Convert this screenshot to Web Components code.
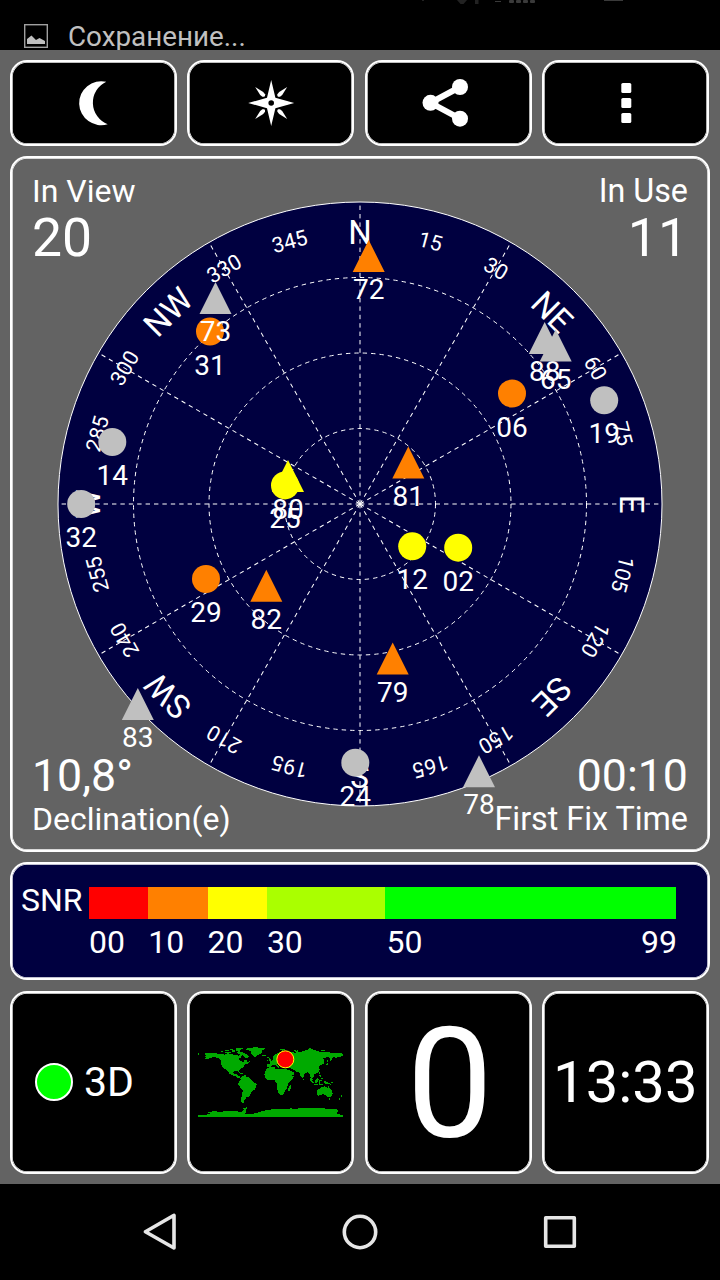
<!DOCTYPE html>
<html lang="en">
<head>
<meta charset="utf-8">
<title>GPS Status</title>
<style>
  html, body { margin: 0; background: #000; }
  body { font-family: Roboto, "Noto Sans", sans-serif; color: #fff; }
</style>
</head>
<body>
<gps-screen></gps-screen>

<script>
const COLORS = {
  none:   '#c0c0c0',
  low:    '#ff8000',
  medium: '#ffff00',
}

// x / y are offsets from the zenith, in px
const SATELLITES = [
  { id: '31', type: 'gps',     snr: 'low',    x: -150,   y: -172.5 },
  { id: '73', type: 'glonass', snr: 'none',   x: -144.5, y: -206 },
  { id: '72', type: 'glonass', snr: 'low',    x: 8.7,    y: -248 },
  { id: '88', type: 'glonass', snr: 'none',   x: 184.7,  y: -166 },
  { id: '65', type: 'glonass', snr: 'none',   x: 195.7,  y: -158.4 },
  { id: '06', type: 'gps',     snr: 'low',    x: 152,    y: -110.5 },
  { id: '19', type: 'gps',     snr: 'none',   x: 244.2,  y: -103.7 },
  { id: '14', type: 'gps',     snr: 'none',   x: -247.7, y: -62 },
  { id: '32', type: 'gps',     snr: 'none',   x: -278.8, y: 0 },
  { id: '80', type: 'glonass', snr: 'medium', x: -72,    y: -28 },
  { id: '25', type: 'gps',     snr: 'medium', x: -75,    y: -18.6 },
  { id: '81', type: 'glonass', snr: 'low',    x: 48.3,   y: -41.5 },
  { id: '12', type: 'gps',     snr: 'medium', x: 52.2,   y: 42.3 },
  { id: '02', type: 'gps',     snr: 'medium', x: 98.2,   y: 43.7 },
  { id: '29', type: 'gps',     snr: 'low',    x: -154,   y: 75 },
  { id: '82', type: 'glonass', snr: 'low',    x: -93.7,  y: 81.7 },
  { id: '79', type: 'glonass', snr: 'low',    x: 32.7,   y: 154.5 },
  { id: '83', type: 'glonass', snr: 'none',   x: -222.2, y: 200 },
  { id: '24', type: 'gps',     snr: 'none',   x: -4.7,   y: 258.7 },
  { id: '78', type: 'glonass', snr: 'none',   x: 119,    y: 267.2 },
]

const POINTS = { 0: 'N', 45: 'NE', 90: 'E', 135: 'SE', 180: 'S', 225: 'SW', 270: 'W', 315: 'NW' }

const ICONS = {
  moon: `<path d="M25.8 2.6A22 22 0 1 0 27.2 45A23 23 0 0 1 25.8 2.6Z" transform="translate(10.5 .2)"/>`,
  compass: `
    <g transform="translate(24.2 24)">
      <path fill-rule="evenodd" d="M0-23L4.2-5.2L23 0L4.2 5.2L0 23L-4.2 5.2L-23 0L-4.2-5.2ZM0-2.8A2.8 2.8 0 1 0 0 2.8A2.8 2.8 0 1 0 0-2.8Z"/>
      ${[0, 90, 180, 270].map(a => `<path transform="rotate(${a})" d="M-16-16L-8-11L-6.2-8.8V-7L-7-6.2H-8.8L-11-8Z"/>`).join('')}
    </g>`,
  share: `
    <path d="M36 8L6.500 23.8L36 39.7" fill="none" stroke="#fff" stroke-width="6"/>
    <circle cx="6.500" cy="23.8" r="8"/><circle cx="36" cy="8" r="8"/><circle cx="36" cy="39.700" r="8"/>`,
  more: [4, 19, 34].map(y => `<rect x="19.3" y="${y}" width="10" height="10" rx="1.6"/>`).join(''),
}

class StatusBar extends HTMLElement {
  connectedCallback() {
    this.attachShadow({ mode: 'open' }).innerHTML = `
      <style>
        :host {
          display: flex;
          justify-content: space-between;
          height: 50px;
          overflow: hidden;
          background: #000;
          color: #c0c0c0;
        }
        .note { display: flex; align-items: flex-start; gap: 20px; padding: 19px 0 0 24px; }
        .note svg { margin-top: 5px; }
        .text { font-size: 27.8px; line-height: 35px; white-space: nowrap; }
      </style>
      <div class="note">
        <svg width="24" height="24">
          <rect x=".7" y=".7" width="22.6" height="22.6" fill="none" stroke="#a0a0a0" stroke-width="1.4"/>
          <path fill="#c0c0c0" d="M3 20V15L7.5 11.5L12 16L15.5 14L21 17V20Z"/>
        </svg>
        <div class="text"><slot></slot></div>
      </div>
      <svg width="300" height="6">
        <g fill="#222">
          <rect x="2" width="2" height="1"/>
          <path d="M37 0H47L43.500 4H40.500Z"/>
          <rect x="55" width="3.500" height="4"/>
        </g>
        <g fill="#3a3a3a">
          <rect x="75" y="1" width="6" height="1"/>
          <rect x="89" width="5" height="3" rx="1"/>
          <rect x="96" width="5" height="3" rx="1"/>
          <rect x="103" width="5" height="3" rx="1"/>
          <rect x="110" width="5" height="3" rx="1"/>
          <rect x="184" width="19" height="1"/>
        </g>
      </svg>
    `
  }
}

class GpsPanel extends HTMLElement {
  connectedCallback() {
    const bg = this.getAttribute('bg') ?? '#000'
    this.attachShadow({ mode: 'open' }).innerHTML = `
      <style>
        :host {
          display: grid;
          place-items: center;
          box-sizing: border-box;
          min-width: 0;
          border: 2px solid #fff;
          border-radius: 17px;
          background: ${bg};
          box-shadow: inset 0 0 0 .7px #fff;
        }
      </style>
      <slot></slot>
    `
  }
}

class GpsIcon extends HTMLElement {
  connectedCallback() {
    this.attachShadow({ mode: 'open' }).innerHTML = `
      <style>
        :host { display: block; width: 48px; height: 48px; }
        svg { display: block; overflow: visible; }
      </style>
      <svg width="48" height="48" fill="#fff">${ICONS[this.getAttribute('name')]}</svg>
    `
  }
}

class SkyView extends HTMLElement {
  connectedCallback() {
    const R = 302
    const rings = [1, 2, 3].map(i => `<circle r="${R * i / 4}"/>`).join('')
    let spokes = ''
    let labels = ''
    for (let a = 0; a < 360; a += 15) {
      if (a % 30 === 0) spokes += `<line y2="${-R}" transform="rotate(${a})"/>`
      labels += POINTS[a]
        ? `<text class="point" y="-260" transform="rotate(${a})">${POINTS[a]}</text>`
        : `<text class="deg" y="-264.500" transform="rotate(${a})">${a}</text>`
    }

    this.attachShadow({ mode: 'open' }).innerHTML = `
      <style>
        :host { display: block; width: 696px; height: 692px; }
        svg { display: block; }
        text { fill: #fff; text-anchor: middle; }
        .grid { fill: none; stroke: #fff; stroke-width: 1; stroke-dasharray: 4.4 4; }
        .point { font-size: 33px; }
        .deg { font-size: 21.3px; }
        .id { font-size: 28px; }
      </style>
      <svg width="696" height="692" viewBox="-348 -346 696 692">
        <circle r="${R}" fill="#000040" stroke="#fff" stroke-width="1"/>
        <g class="grid">${rings}${spokes}</g>
        ${labels}
        ${SATELLITES.map(s => this._satellite(s)).join('')}
      </svg>
    `
  }

  _satellite({ id, type, snr, x, y }) {
    const shape = type === 'gps'
      ? `<circle r="14" fill="${COLORS[snr]}"/>`
      : `<path d="M0-16L16 16H-16Z" fill="${COLORS[snr]}"/>`
    return `<g transform="translate(${x} ${y})">${shape}<text class="id" y="43">${id}</text></g>`
  }
}

// four captions in the corners of the sky view
class SkyCaptions extends HTMLElement {
  connectedCallback() {
    this.attachShadow({ mode: 'open' }).innerHTML = `
      <style>
        :host {
          display: grid;
          grid-template-columns: auto auto;
          justify-content: space-between;
          align-content: space-between;
          box-sizing: border-box;
          width: 696px;
          height: 692px;
          padding: 14px 20px 12px;
        }
        .r { text-align: right; }
        .name { font-size: 32px; line-height: 38px; }
        .r .name { font-size: 32.3px; }
        .big { font-size: 53.5px; line-height: 56px; }
        .mid { font-size: 44.7px; line-height: 46px; margin-bottom: 1px; }
      </style>
      <div><div class="name">In View</div><div class="big">20</div></div>
      <div class="r"><div class="name">In Use</div><div class="big">11</div></div>
      <div><div class="mid">10,8°</div><div class="name">Declination(e)</div></div>
      <div class="r"><div class="mid">00:10</div><div class="name">First Fix Time</div></div>
    `
  }
}

class SnrScale extends HTMLElement {
  connectedCallback() {
    this.attachShadow({ mode: 'open' }).innerHTML = `
      <style>
        :host {
          display: grid;
          grid-template-columns: 68px 587px;
          box-sizing: border-box;
          width: 696px;
          height: 114px;
          padding: 23px 9px 0;
          font-size: 32px;
          line-height: 38px;
        }
        .title { margin-top: -6px; }
        .scale { display: grid; grid-template-columns: 10fr 10fr 10fr 20fr 49fr; align-content: start; }
        .bar { height: 32px; }
        .num { margin-top: 4px; }
        .last { display: flex; justify-content: space-between; margin-right: -1px; padding-left: 1px; }
      </style>
      <div class="title">SNR</div>
      <div class="scale">
        <div class="bar" style="background:#ff0000"></div>
        <div class="bar" style="background:#ff8000"></div>
        <div class="bar" style="background:#ffff00"></div>
        <div class="bar" style="background:#aaff00"></div>
        <div class="bar" style="background:#00ff00"></div>
        <div class="num">00</div>
        <div class="num">10</div>
        <div class="num">20</div>
        <div class="num">30</div>
        <div class="num last"><span>50</span><span>99</span></div>
      </div>
    `
  }
}

class FixState extends HTMLElement {
  connectedCallback() {
    this.attachShadow({ mode: 'open' }).innerHTML = `
      <style>
        :host { display: flex; align-items: center; gap: 11px; font-size: 41px; line-height: 48px; margin-right: 18px; }
        .led { box-sizing: border-box; width: 38px; height: 38px; border: 2px solid #fff; border-radius: 50%; background: #00ff00; }
      </style>
      <div class="led"></div><span><slot></slot></span>
    `
  }
}

class WorldMap extends HTMLElement {
  connectedCallback() {
    this.attachShadow({ mode: 'open' }).innerHTML = `
      <style>
        :host { display: block; width: 145px; height: 71px; }
        svg { display: block; overflow: visible; }
      </style>
      <svg width="145" height="71" viewBox="38 38 435 213">
        <g fill="#00aa00" shape-rendering="crispEdges">
          <!-- north america -->
          <path d="M38 56L42 54V60L38 62ZM58 58L66 55L84 56L104 59L118 61L134 58L148 62L156 60L158 66L164 60L170 62L166 70L160 74L166 80L174 84L178 76L184 76L186 82L192 84L188 88L182 88L176 92L176 97L168 102L162 108L162 116L156 110L148 110L144 114L146 120L154 119L156 123L162 124L164 130L170 131L168 134L158 131L150 126L140 123L132 118L126 108L118 104L110 96L107 86L106 77L96 70L84 68L74 71L64 75L56 74L64 70L57 66L62 63Z"/>
          <path d="M106 50H114V54H106ZM118 47H130V50H118ZM120 53L134 52L140 56L130 58L120 57ZM140 48H148V53H140ZM150 43L164 40L180 40L170 44L162 49L154 51ZM152 52L164 51L174 55L184 60L190 66L186 72L178 70L174 64L164 60L156 57ZM134 43H144V46H134ZM190 78L194 81L190 84ZM160 114L170 116L176 120L170 120L162 117ZM176 121H182V124H176Z"/>
          <path d="M182 44L194 40L210 39L238 41L238 44L230 48L232 54L226 59L216 62L210 69L204 66L198 58L196 51L190 48L182 48ZM228 62L240 61L241 65L232 67Z"/>
          <!-- south america -->
          <path d="M167 129L174 125L184 127L194 131L202 140L206 144L216 149L212 156L208 166L198 173L194 182L188 188L182 190L178 197L174 203L177 207L168 203L166 194L171 180L172 168L164 158L159 150L160 142L166 138Z"/>
          <!-- africa -->
          <path d="M244 102L256 98L268 98L270 103L280 104L292 103L304 105L308 115L314 125L318 126L326 125L322 133L314 141L308 148L306 156L304 164L298 171L294 180L284 183L279 174L276 164L276 154L273 145L268 138L256 137L246 136L240 129L237 122L240 111ZM312 156L318 151L317 160L312 172L308 170L309 161Z"/>
          <!-- europe -->
          <path d="M244 97V88L254 88L252 82L262 78L264 74L262 68L268 62L276 56L286 52L300 53L322 53L330 57L340 55L344 95L330 102L320 104L314 101L304 102L294 99L290 96L286 99L282 93L276 90L282 98L278 101L270 91L260 92L255 98ZM250 72L254 70L258 78L250 81ZM246 76H249V80H246ZM246 67H252V70H246ZM284 45L294 43L300 45L292 49Z"/>
          <!-- asia -->
          <path d="M318 58L332 56L330 50L338 48L336 54L348 52L360 48L370 45L374 42L380 45L390 48L404 53L416 52L436 55L450 55L474 58V66L462 67L452 70L443 69L436 80L432 74L438 70L424 69L414 72L418 80L414 90L404 92L400 98L404 106L398 115L388 119L384 118L386 127L380 131L384 140L376 130L372 118L366 113L356 121L354 130L350 132L344 121L342 114L330 111L328 107L318 104L316 98L326 96Z"/>
          <path d="M302 106L312 108L320 112L328 116L324 122L312 126L306 116ZM414 99L420 94L426 92L430 86L424 86L422 93L416 96ZM424 76H427V84H424ZM402 114H405V118H402ZM322 50L330 46L336 46L328 51ZM370 41H378V44H370ZM408 47H418V50H408ZM352 134H355V138H352Z"/>
          <path d="M372 130L378 134L384 143L386 148L380 144L374 137ZM386 149H398V152H386ZM388 138L396 132L400 136L398 144L390 145ZM402 137H409V140H405V148H402ZM402 122L406 122L408 130L404 129ZM406 130H412V135H406ZM414 140L422 141L430 145L438 151L430 150L420 148ZM402 150H412V153H402ZM438 144H444V146H438Z"/>
          <!-- australia -->
          <path d="M394 168L402 164L408 159L416 156L422 158L426 162L430 154L434 164L440 170L442 178L438 186L432 189L424 186L420 181L410 180L400 184L394 182ZM430 191H435V196H430ZM466 180L472 184L470 190L466 188ZM460 192L467 189L464 196L460 197Z"/>
          <!-- antarctica -->
          <path d="M38 243L66 242L62 239L74 238L68 234L84 231L106 232L134 230L156 231L168 233L176 227L184 218L186 221L180 227L184 234L180 238L196 240L212 236L230 231L248 226L270 225L296 225L318 222L324 225L340 222L372 222L402 220L430 224L454 225L460 230L452 236L462 240L474 243V249H38ZM174 221H180V224H174Z"/>
        </g>
        <circle cx="300" cy="75" r="25.500" fill="#ff0000" stroke="#ffff00" stroke-width="3"/>
      </svg>
    `
  }
}

class NavBar extends HTMLElement {
  connectedCallback() {
    this.attachShadow({ mode: 'open' }).innerHTML = `
      <style>
        :host {
          display: grid;
          grid-template-columns: repeat(3, 200px);
          place-content: center;
          justify-items: center;
          height: 96px;
          background: #000;
        }
        svg { fill: none; stroke: #e6e6e6; stroke-width: 3.6; stroke-linejoin: round; }
      </style>
      <svg width="40" height="40"><path d="M34 3.300V36L5.400 19.700Z"/></svg>
      <svg width="40" height="40"><circle cx="20" cy="20" r="15.700"/></svg>
      <svg width="40" height="40"><rect x="5.700" y="5.700" width="28.600" height="28.600"/></svg>
    `
  }
}

class GpsScreen extends HTMLElement {
  connectedCallback() {
    this.attachShadow({ mode: 'open' }).innerHTML = `
      <style>
        :host { display: flex; flex-direction: column; width: 720px; height: 1280px; overflow: hidden; }
        main {
          flex: 1;
          display: flex;
          flex-direction: column;
          gap: 10px;
          padding: 10px;
          background: #636363;
        }
        .row { display: grid; grid-template: 100% / repeat(4, 167px); justify-content: space-between; width: 699.3px; }
        .tools { height: 86px; }
        .sky { height: 696px; }
        .layers { display: grid; }
        .layers > * { grid-area: 1 / 1; }
        .snr { height: 118px; }
        .info { height: 183px; margin-top: 1px; }
        .info > * > * { margin-bottom: 1px; }
        .speed { font-size: 154px; line-height: 170px; padding: 5px 0 0 3px; }
        .clock { font-size: 58px; line-height: 70px; padding-right: 1px; }
      </style>
      <status-bar>Сохранение...</status-bar>
      <main>
        <div class="row tools">
          <gps-panel><gps-icon name="moon"></gps-icon></gps-panel>
          <gps-panel><gps-icon name="compass"></gps-icon></gps-panel>
          <gps-panel><gps-icon name="share"></gps-icon></gps-panel>
          <gps-panel><gps-icon name="more"></gps-icon></gps-panel>
        </div>
        <gps-panel class="sky" bg="#636363">
          <div class="layers">
            <sky-view></sky-view>
            <sky-captions></sky-captions>
          </div>
        </gps-panel>
        <gps-panel class="snr" bg="#000040"><snr-scale></snr-scale></gps-panel>
        <div class="row info">
          <gps-panel><fix-state>3D</fix-state></gps-panel>
          <gps-panel><world-map></world-map></gps-panel>
          <gps-panel><div class="speed">0</div></gps-panel>
          <gps-panel><div class="clock">13:33</div></gps-panel>
        </div>
      </main>
      <nav-bar></nav-bar>
    `
  }
}

customElements.define('status-bar', StatusBar)
customElements.define('gps-panel', GpsPanel)
customElements.define('gps-icon', GpsIcon)
customElements.define('sky-view', SkyView)
customElements.define('sky-captions', SkyCaptions)
customElements.define('snr-scale', SnrScale)
customElements.define('fix-state', FixState)
customElements.define('world-map', WorldMap)
customElements.define('nav-bar', NavBar)
customElements.define('gps-screen', GpsScreen)
</script>
</body>
</html>
